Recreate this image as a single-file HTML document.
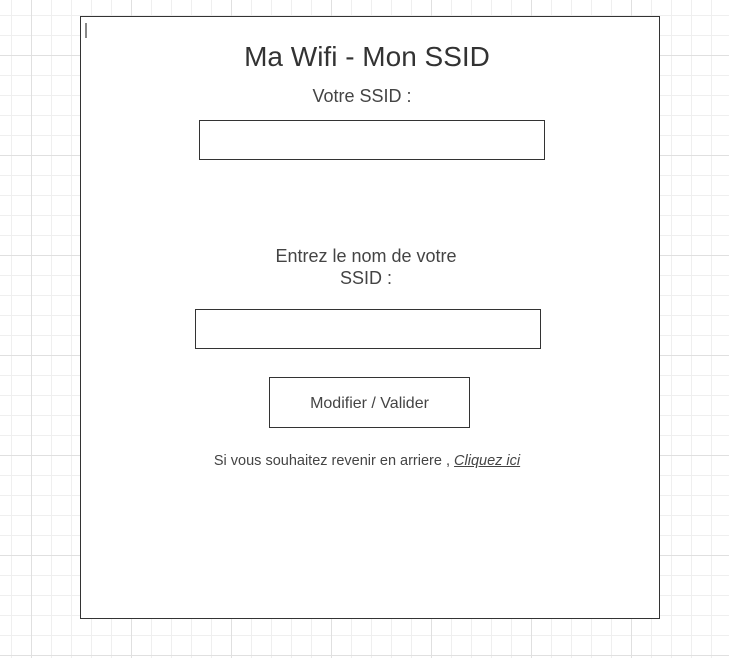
<!DOCTYPE html>
<html><head><style>
html,body{margin:0;padding:0}
body{width:729px;height:658px;position:relative;overflow:hidden;background-color:#fff;
background-image:
linear-gradient(to right,#e0e0e0 1px,transparent 1px),
linear-gradient(to bottom,#e0e0e0 1px,transparent 1px),
linear-gradient(to right,#efefef 1px,transparent 1px),
linear-gradient(to bottom,#efefef 1px,transparent 1px);
background-size:100px 100px,100px 100px,20px 20px,20px 20px;
background-position:31px 0,0 55px,11px 0,0 15px;
font-family:"Liberation Sans",sans-serif;color:#444}
.a{position:absolute}
.box{left:80px;top:16px;width:578px;height:601px;border:1px solid #333;background:#fff}
.t{text-align:center;white-space:nowrap}
.in{border:1px solid #333;background:#fff}
</style></head><body>
<div class="a box"></div>
<div class="a" style="left:85px;top:23px;width:2px;height:15px;background:#888"></div>
<div class="a t" style="left:67px;width:600px;top:41px;font-size:28px;color:#333">Ma Wifi - Mon SSID</div>
<div class="a t" style="left:62px;width:600px;top:86px;font-size:18px">Votre SSID :</div>
<div class="a in" style="left:199px;top:120px;width:344px;height:38px"></div>
<div class="a t" style="top:245px;font-size:18px;line-height:22px;left:216px;width:300px">Entrez le nom de votre<br>SSID :</div>
<div class="a in" style="left:195px;top:309px;width:344px;height:38px"></div>
<div class="a in" style="left:269px;top:377px;width:199px;height:49px;font-size:16px;line-height:51px;text-align:center">Modifier / Valider</div>
<div class="a t" style="top:453px;font-size:14.5px;left:67px;width:600px">Si vous souhaitez revenir en arriere , <i style="text-decoration:underline">Cliquez ici</i></div>
</body></html>
